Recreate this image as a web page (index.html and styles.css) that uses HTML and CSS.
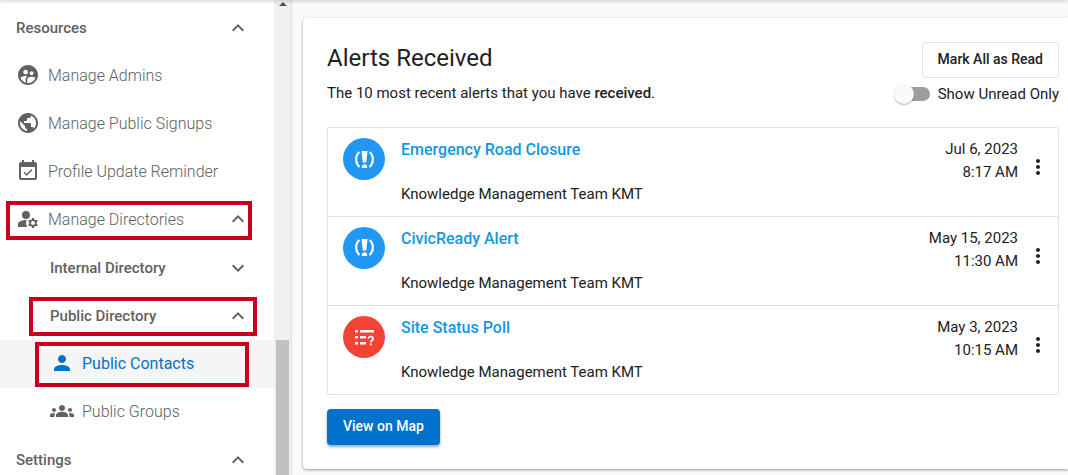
FILE: index.html
```
<!DOCTYPE html>
<html lang="en">
<head>
    <meta charset="UTF-8">
    <meta name="viewport" content="width=device-width, initial-scale=1.0">
    <title>Alerts Received</title>
    <link rel="stylesheet" href="styles.css">
</head>
<body>

<div class="topbar-shadow"></div>

<div class="page">
    <nav class="sidebar">
        <button type="button" class="nav-row nav-heading">
            <span>Resources</span>
            <svg class="chevron" viewBox="0 0 24 24"><path d="M12 8l-6 6 1.410 1.410L12 10.830l4.590 4.580L18 14z"/></svg>
        </button>
        <a href="#" class="nav-row nav-link">
            <svg class="nav-icon" viewBox="0 0 24 24"><path d="M12 2C6.480 2 2 6.480 2 12s4.480 10 10 10 10-4.480 10-10S17.520 2 12 2zm3.610 6.340c1.070 0 1.930.86 1.930 1.930s-.86 1.930-1.930 1.930-1.930-.86-1.930-1.930c-.01-1.070.86-1.930 1.930-1.930zm-6-1.580c1.300 0 2.360 1.060 2.360 2.360s-1.060 2.360-2.360 2.360-2.360-1.060-2.360-2.360c0-1.310 1.050-2.360 2.360-2.360zm0 9.130v3.750c-2.400-.75-4.300-2.600-5.140-4.960 1.050-1.120 3.670-1.690 5.140-1.690.53 0 1.200.08 1.900.22-1.640.87-1.900 2.020-1.900 2.680zM12 20c-.27 0-.53-.01-.79-.04v-4.070c0-1.420 2.940-2.130 4.400-2.130 1.070 0 2.920.39 3.840 1.150C18.280 17.880 15.390 20 12 20z"/></svg>
            <span>Manage Admins</span>
        </a>
        <a href="#" class="nav-row nav-link">
            <svg class="nav-icon" viewBox="0 0 24 24"><path d="M12 2C6.480 2 2 6.480 2 12s4.480 10 10 10 10-4.480 10-10S17.520 2 12 2zm-1 17.930c-3.950-.49-7-3.850-7-7.930 0-.62.08-1.210.21-1.790L9 15v1c0 1.100.9 2 2 2v1.930zm6.900-2.540c-.26-.81-1-1.390-1.900-1.390h-1v-3c0-.55-.45-1-1-1H8v-2h2c.55 0 1-.45 1-1V7h2c1.100 0 2-.9 2-2v-.41c2.930 1.190 5 4.060 5 7.410 0 2.080-.8 3.970-2.100 5.390z"/></svg>
            <span>Manage Public Signups</span>
        </a>
        <a href="#" class="nav-row nav-link">
            <svg class="nav-icon" viewBox="0 0 24 24"><path d="M16.530 11.060L15.470 10l-4.880 4.880-2.120-2.120-1.060 1.060L10.590 17l5.940-5.940zM19 3h-1V1h-2v2H8V1H6v2H5c-1.110 0-1.990.9-1.990 2L3 19c0 1.100.89 2 2 2h14c1.100 0 2-.9 2-2V5c0-1.100-.9-2-2-2zm0 16H5V8h14v11z"/></svg>
            <span>Profile Update Reminder</span>
        </a>
        <button type="button" class="nav-row nav-link marked marked-manage">
            <svg class="nav-icon" viewBox="0 0 24 24"><path d="M10 12a4 4 0 1 0 0-8 4 4 0 0 0 0 8zM10.670 13.020C10.450 13.010 10.230 13 10 13c-2.420 0-4.680.67-6.610 1.820C2.510 15.340 2 16.320 2 17.350V20h9.260A6.963 6.963 0 0 1 10 16c0-1.070.25-2.080.67-2.980zM20.750 16c0-.22-.03-.42-.06-.63l1.140-1.010-1-1.730-1.450.49c-.32-.27-.68-.48-1.080-.63L18 11h-2l-.3 1.490c-.4.15-.76.36-1.080.63l-1.450-.49-1 1.730 1.140 1.010c-.03.21-.06.41-.06.63s.03.42.06.63l-1.140 1.010 1 1.730 1.450-.49c.32.27.68.48 1.080.63L16 21h2l.3-1.490c.4-.15.76-.36 1.080-.63l1.450.49 1-1.730-1.140-1.010c.03-.21.06-.41.06-.63zM17 18c-1.100 0-2-.9-2-2s.9-2 2-2 2 .9 2 2-.9 2-2 2z"/></svg>
            <span>Manage Directories</span>
            <svg class="chevron" viewBox="0 0 24 24"><path d="M12 8l-6 6 1.410 1.410L12 10.830l4.590 4.580L18 14z"/></svg>
        </button>
        <button type="button" class="nav-row nav-heading nav-sub">
            <span>Internal Directory</span>
            <svg class="chevron" viewBox="0 0 24 24"><path d="M16.590 8.590L12 13.170 7.410 8.590 6 10l6 6 6-6z"/></svg>
        </button>
        <button type="button" class="nav-row nav-heading nav-sub marked marked-public">
            <span>Public Directory</span>
            <svg class="chevron" viewBox="0 0 24 24"><path d="M12 8l-6 6 1.410 1.410L12 10.830l4.590 4.580L18 14z"/></svg>
        </button>
        <a href="#" class="nav-row nav-link nav-sub active marked marked-contacts">
            <svg class="nav-icon" viewBox="0 0 24 24"><path d="M12 12c2.210 0 4-1.790 4-4s-1.790-4-4-4-4 1.790-4 4 1.790 4 4 4zm0 2c-2.670 0-8 1.340-8 4v2h16v-2c0-2.660-5.330-4-8-4z"/></svg>
            <span>Public Contacts</span>
        </a>
        <a href="#" class="nav-row nav-link nav-sub">
            <svg class="nav-icon" viewBox="0 0 24 24"><path d="M12 12.750c1.630 0 3.070.39 4.240.9 1.080.48 1.760 1.560 1.760 2.730V18H6v-1.610c0-1.180.68-2.260 1.760-2.730 1.170-.52 2.610-.91 4.240-.91zM4 13c1.100 0 2-.9 2-2s-.9-2-2-2-2 .9-2 2 .9 2 2 2zm1.130 1.100C4.760 14.040 4.390 14 4 14c-.99 0-1.930.21-2.780.58C.48 14.900 0 15.620 0 16.430V18h4.500v-1.610c0-.83.23-1.610.63-2.290zM20 13c1.100 0 2-.9 2-2s-.9-2-2-2-2 .9-2 2 .9 2 2 2zm4 3.430c0-.81-.48-1.530-1.220-1.850C21.930 14.210 20.990 14 20 14c-.39 0-.76.04-1.130.1.4.68.63 1.460.63 2.290V18H24v-1.570zM12 6c1.660 0 3 1.340 3 3s-1.340 3-3 3-3-1.340-3-3 1.340-3 3-3z"/></svg>
            <span>Public Groups</span>
        </a>
        <button type="button" class="nav-row nav-heading">
            <span>Settings</span>
            <svg class="chevron" viewBox="0 0 24 24"><path d="M12 8l-6 6 1.410 1.410L12 10.830l4.590 4.580L18 14z"/></svg>
        </button>
    </nav>

    <div class="scrollbar">
        <svg class="scroll-arrow" viewBox="0 0 8 4"><path d="M4 0l4 4H0z"/></svg>
        <div class="scroll-thumb"></div>
    </div>

    <main class="content">
        <section class="card">
            <header class="card-header">
                <div>
                    <h1>Alerts Received</h1>
                    <p class="subtitle">The 10 most recent alerts that you have <strong>received</strong>.</p>
                </div>
                <div class="card-actions">
                    <button type="button" class="btn btn-outline">Mark All as Read</button>
                    <label class="toggle">
                        <input type="checkbox" class="toggle-input">
                        <span>Show Unread Only</span>
                    </label>
                </div>
            </header>

            <ul class="alert-list">
                <li class="alert-item">
                    <svg class="alert-icon" viewBox="0 0 42 42">
                        <circle cx="21" cy="21" r="21" fill="#2196f3"/>
                        <path d="M18.500 13h6l-1.200 11.500h-3.600z" fill="#fff"/>
                        <path d="M18.800 30v-1.200c0-3.400 5.400-3.400 5.400 0V30z" fill="#fff"/>
                        <path d="M16.500 14c-4.500 3.500-4.500 11 0 15M26.500 14c4.500 3.500 4.500 11 0 15" fill="none" stroke="#fff" stroke-width="2.200"/>
                    </svg>
                    <div class="alert-body">
                        <a href="#" class="alert-title">Emergency Road Closure</a>
                        <p>Knowledge Management Team KMT</p>
                    </div>
                    <div class="alert-date">Jul 6, 2023<br>8:17 AM</div>
                    <button type="button" class="more" aria-label="More options">
                        <svg viewBox="0 0 24 24"><path d="M12 8c1.100 0 2-.9 2-2s-.9-2-2-2-2 .9-2 2 .9 2 2 2zm0 2c-1.100 0-2 .9-2 2s.9 2 2 2 2-.9 2-2-.9-2-2-2zm0 6c-1.100 0-2 .9-2 2s.9 2 2 2 2-.9 2-2-.9-2-2-2z"/></svg>
                    </button>
                </li>
                <li class="alert-item">
                    <svg class="alert-icon" viewBox="0 0 42 42">
                        <circle cx="21" cy="21" r="21" fill="#2196f3"/>
                        <path d="M18.500 12h6l-1.200 11.500h-3.600z" fill="#fff"/>
                        <path d="M18.800 29v-1.200c0-3.400 5.400-3.400 5.400 0V29z" fill="#fff"/>
                        <path d="M16.500 13c-4.500 3.500-4.500 11 0 15M26.500 13c4.500 3.500 4.500 11 0 15" fill="none" stroke="#fff" stroke-width="2.200"/>
                    </svg>
                    <div class="alert-body">
                        <a href="#" class="alert-title">CivicReady Alert</a>
                        <p>Knowledge Management Team KMT</p>
                    </div>
                    <div class="alert-date">May 15, 2023<br>11:30 AM</div>
                    <button type="button" class="more" aria-label="More options">
                        <svg viewBox="0 0 24 24"><path d="M12 8c1.100 0 2-.9 2-2s-.9-2-2-2-2 .9-2 2 .9 2 2 2zm0 2c-1.100 0-2 .9-2 2s.9 2 2 2 2-.9 2-2-.9-2-2-2zm0 6c-1.100 0-2 .9-2 2s.9 2 2 2 2-.9 2-2-.9-2-2-2z"/></svg>
                    </button>
                </li>
                <li class="alert-item">
                    <svg class="alert-icon" viewBox="0 0 42 42">
                        <circle cx="21" cy="21" r="21" fill="#f44336"/>
                        <path d="M12 14h3v2.500h-3zM12 20h3v2.500h-3zM12 26h3v2.500h-3zM17 14h14v2.500H17zM17 20h6v2.500h-6zM17 26h6v2.500h-6z" fill="#fff"/>
                        <path d="M25.500 22.500c.3-2.500 4.500-2.400 4.500.2 0 1.900-2.200 1.600-2.200 3.600" fill="none" stroke="#fff" stroke-width="1.800"/>
                        <circle cx="27.800" cy="28.400" r="1.100" fill="#fff"/>
                    </svg>
                    <div class="alert-body">
                        <a href="#" class="alert-title">Site Status Poll</a>
                        <p>Knowledge Management Team KMT</p>
                    </div>
                    <div class="alert-date">May 3, 2023<br>10:15 AM</div>
                    <button type="button" class="more" aria-label="More options">
                        <svg viewBox="0 0 24 24"><path d="M12 8c1.100 0 2-.9 2-2s-.9-2-2-2-2 .9-2 2 .9 2 2 2zm0 2c-1.100 0-2 .9-2 2s.9 2 2 2 2-.9 2-2-.9-2-2-2zm0 6c-1.100 0-2 .9-2 2s.9 2 2 2 2-.9 2-2-.9-2-2-2z"/></svg>
                    </button>
                </li>
            </ul>

            <button type="button" class="btn btn-primary">View on Map</button>
        </section>
    </main>
</div>

</body>
</html>
```
FILE: styles.css
```
* {
    box-sizing: border-box;
}

body {
    margin: 0;
    font-family: Roboto, sans-serif;
    font-size: 15px;
    color: #212121;
    background-color: #fafafa;
}

button {
    font-family: inherit;
    cursor: pointer;
}

a {
    text-decoration: none;
}

.page {
    display: flex;
    height: 100vh;
    overflow: hidden;
}

/* Lower edge of the header's shadow */
.topbar-shadow {
    position: absolute;
    top: -4px;
    left: 0;
    right: 0;
    height: 4px;
    box-shadow: 0 1px 4px rgba(0, 0, 0, 0.2);
    z-index: 1;
}

/* Sidebar */
.sidebar {
    flex: 0 0 274px;
    padding-top: 4px;
    background-color: #fff;
    overflow: hidden;
}

.nav-row {
    position: relative;
    display: flex;
    align-items: center;
    width: 100%;
    height: 48px;
    padding: 0 24px 0 16px;
    border: none;
    background: none;
    color: #616161;
    text-align: left;
}

.nav-heading {
    font-size: 15px;
    font-weight: 500;
}

.nav-link {
    gap: 8px;
    padding-bottom: 2px;
    font-size: 16px;
    font-weight: 300;
}

.nav-sub {
    padding-left: 50px;
}

.nav-icon {
    width: 24px;
    height: 24px;
    fill: currentColor;
}

.chevron {
    width: 24px;
    height: 24px;
    margin-left: auto;
    fill: currentColor;
}

.active {
    background-color: #f5f5f5;
    color: #0072ce;
    font-weight: 400;
}

/* Red highlight boxes */
.marked::after {
    content: "";
    position: absolute;
    border: 4px solid #c8001e;
}

.marked-manage::after {
    inset: 5px 22px 4px 6px;
}

.marked-public::after {
    inset: 5px 17px 4px 29px;
}

.marked-contacts::after {
    inset: 2px 25px 1px 35px;
}

/* Scrollbar */
.scrollbar {
    display: flex;
    flex: 0 0 18px;
    flex-direction: column;
    align-items: center;
    justify-content: space-between;
    padding-top: 2px;
    border-right: 1px solid #e0e0e0;
    background-color: #f0f0f0;
}

.scroll-arrow {
    width: 8px;
    height: 4px;
    fill: #505050;
}

.scroll-thumb {
    width: 13px;
    height: 135px;
    background-color: #c1c1c1;
}

/* Content */
.content {
    flex: 1;
    padding: 18px 0 0 11px;
}

.card {
    padding: 24px 9px 24px 24px;
    border-radius: 4px 0 0 4px;
    background-color: #fff;
    box-shadow: 0 1px 3px rgba(0, 0, 0, 0.4);
}

.card-header {
    display: flex;
    justify-content: space-between;
    margin-bottom: 17px;
}

h1 {
    margin: 0;
    font-size: 24px;
    font-weight: 400;
    line-height: 32px;
}

.subtitle {
    margin: 8px 0 0;
    line-height: 22px;
}

strong {
    font-weight: 500;
}

.card-actions {
    display: flex;
    flex-direction: column;
    align-items: flex-end;
}

.btn {
    height: 36px;
    padding: 0 16px 2px;
    border: none;
    border-radius: 4px;
    font-size: 14px;
    font-weight: 500;
}

.btn-outline {
    padding: 0 15px 2px;
    border: 1px solid #e0e0e0;
    background-color: #fff;
    color: #212121;
}

.btn-primary {
    background-color: #0072ce;
    color: #fff;
    box-shadow: 0 2px 3px rgba(0, 0, 0, 0.35);
}

.toggle {
    display: flex;
    align-items: center;
    gap: 8px;
    height: 32px;
}

.toggle-input {
    position: relative;
    width: 36px;
    height: 14px;
    margin: 0;
    border-radius: 7px;
    background: linear-gradient(to right, transparent 8px, #9e9e9e 8px);
    appearance: none;
}

.toggle-input::before {
    content: "";
    position: absolute;
    top: -3px;
    left: 0;
    width: 20px;
    height: 20px;
    border-radius: 50%;
    background-color: #fafafa;
    box-shadow: 0 1px 2px rgba(0, 0, 0, 0.3);
}

.toggle-input:checked::before {
    left: 16px;
}

.alert-list {
    margin: 0 0 14px;
    padding: 0;
    border: 1px solid #e0e0e0;
    border-radius: 2px;
    list-style: none;
}

.alert-item {
    display: flex;
    align-items: flex-start;
    padding: 10px 8px 10px 15px;
    line-height: 23px;
}

.alert-item + .alert-item {
    border-top: 1px solid #e0e0e0;
}

.alert-icon {
    width: 42px;
    height: 42px;
    margin-right: 16px;
}

.alert-body {
    flex: 1;
}

.alert-body p {
    margin: 22px 0 0;
}

.alert-title {
    display: block;
    color: #1297e0;
    font-size: 16px;
    font-weight: 500;
}

.alert-date {
    text-align: right;
}

.more {
    width: 24px;
    height: 24px;
    margin: 17px 0 0 8px;
    padding: 0;
    border: none;
    background: none;
}

.more svg {
    display: block;
    fill: #212121;
}
```
